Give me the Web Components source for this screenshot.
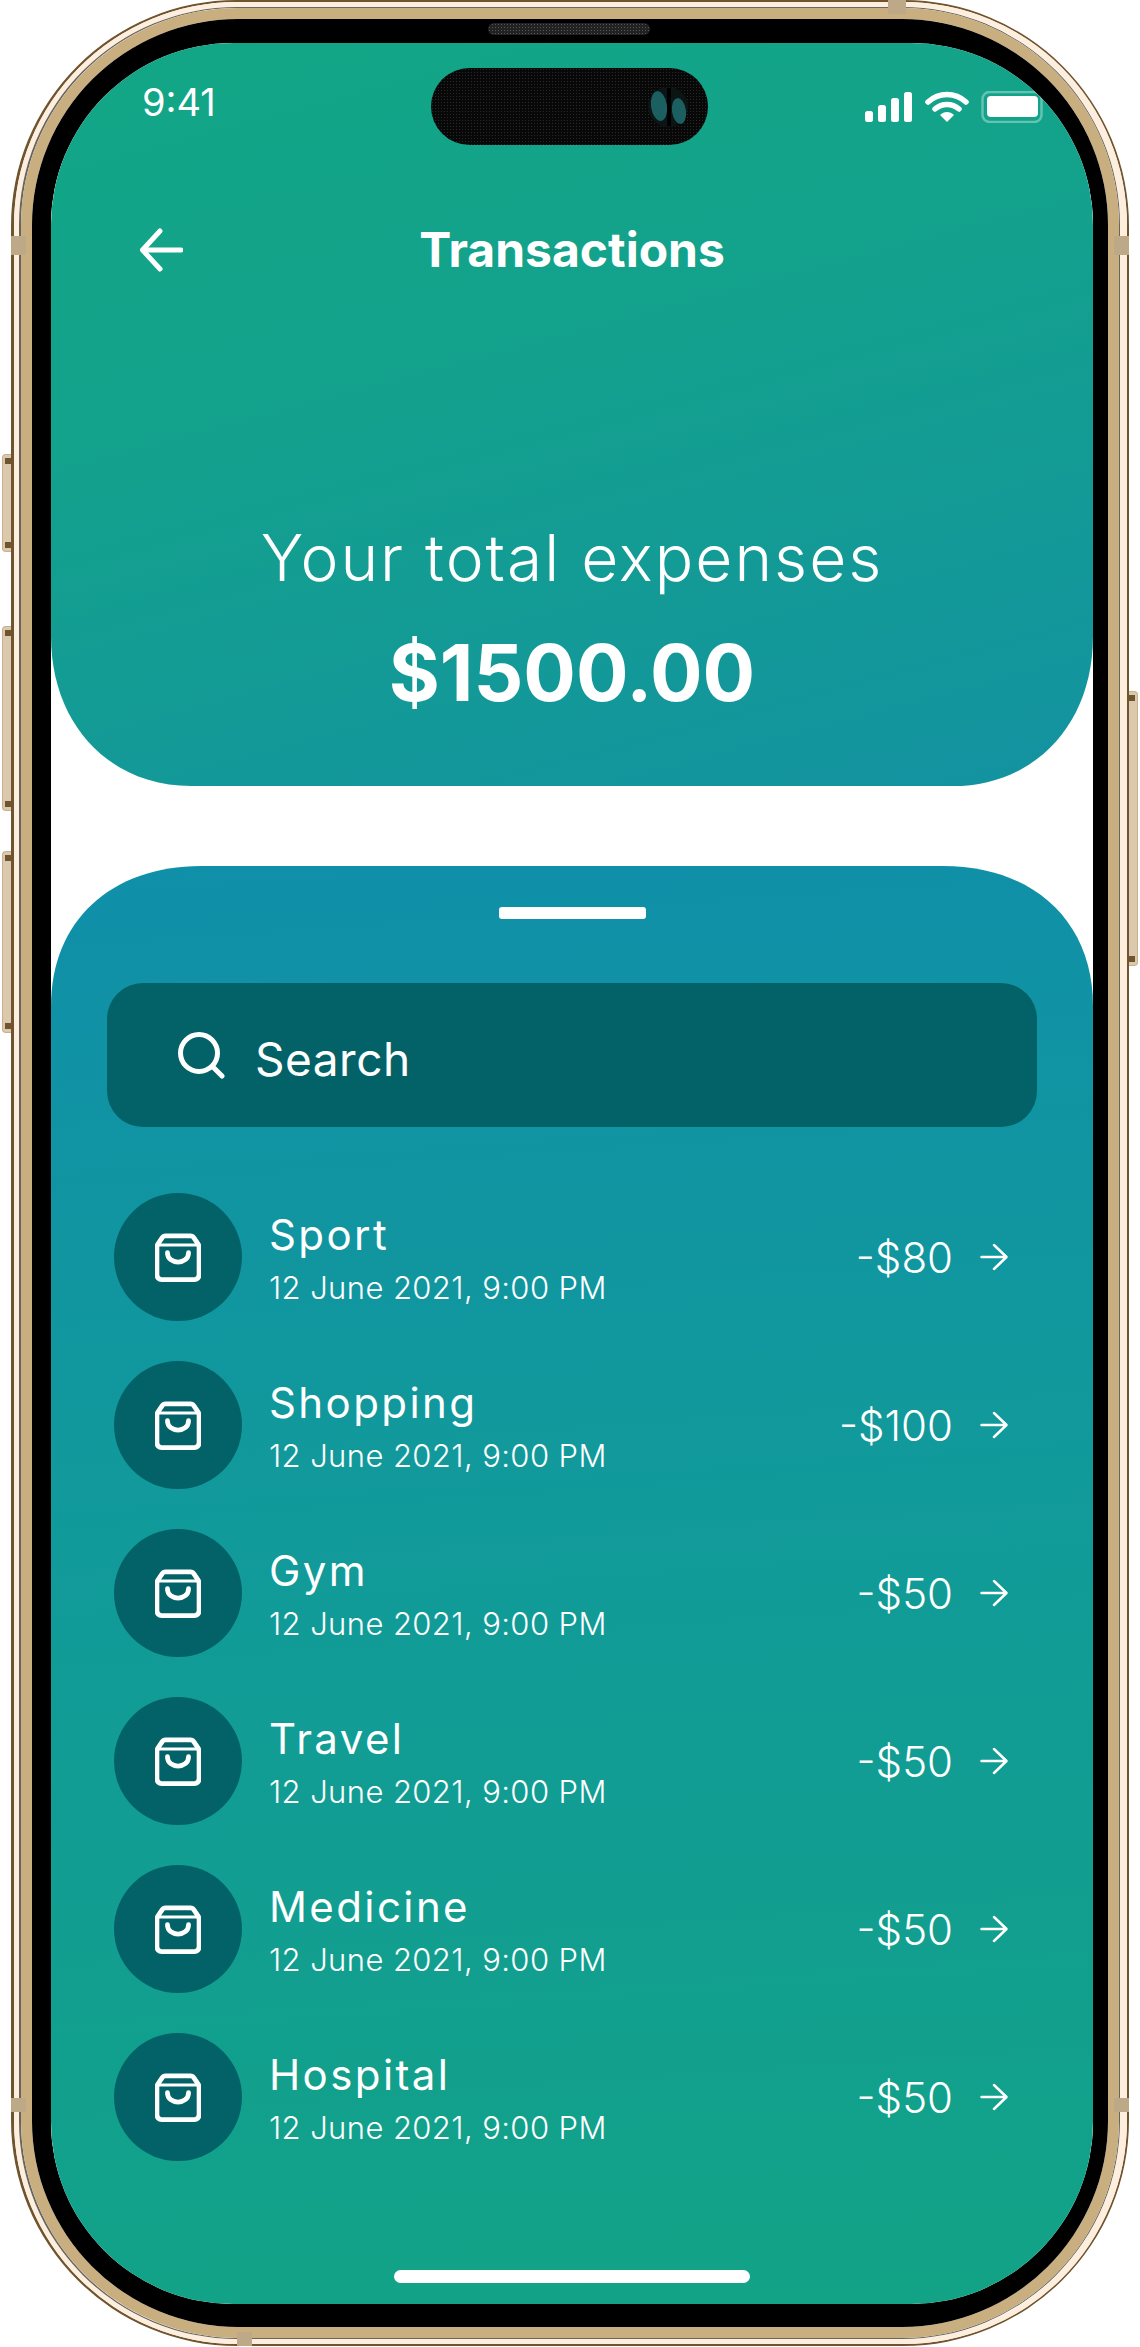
<!DOCTYPE html>
<html lang="en">
<head>
<meta charset="utf-8">
<title>Transactions</title>
<style>
	html, body { margin: 0; background: #fff; }
	body { font-family: Inter, "Liberation Sans", sans-serif; color: #fff; }
</style>
</head>
<body>
<phone-frame>
	<expense-summary amount="$1500.00">Your total expenses</expense-summary>
	<transaction-panel>
		<search-box>Search</search-box>
		<transaction-row amount="-$80" date="12 June 2021, 9:00 PM">Sport</transaction-row>
		<transaction-row amount="-$100" date="12 June 2021, 9:00 PM">Shopping</transaction-row>
		<transaction-row amount="-$50" date="12 June 2021, 9:00 PM">Gym</transaction-row>
		<transaction-row amount="-$50" date="12 June 2021, 9:00 PM">Travel</transaction-row>
		<transaction-row amount="-$50" date="12 June 2021, 9:00 PM">Medicine</transaction-row>
		<transaction-row amount="-$50" date="12 June 2021, 9:00 PM">Hospital</transaction-row>
	</transaction-panel>
</phone-frame>

<script>
/**
 * PhoneFrame
 * Gold device shell, nested ring by ring, with the screen in its slot.
 */
class PhoneFrame extends HTMLElement {
	constructor() {
		super();
		this.attachShadow({ mode: 'open' });
	}

	connectedCallback() {
		this.render();
	}

	render() {
		this.shadowRoot.innerHTML = `
    <style>
        :host { display: block; position: relative; width: 1118px; height: 2346px; margin-left: 11px; }
        .ring { box-sizing: border-box; height: 100%; border-style: solid; }
        .brown { border-color: #6f5430; border-width: 2px 2px 2px 3px; border-radius: 226px; }
        .cream { border-color: #fdeedd; border-width: 5px 7px 5px 5px; border-radius: 223px; }
        .line { border-color: #66665f; border-width: 1px 1px 1px 2px; border-radius: 218px; }
        .tan { border-color: #c9ae80; border-width: 11px; border-radius: 217px; }
        .bezel { position: relative; border-color: #000; border-width: 24px 15px 23px 19px; border-radius: 206px; }
        .screen {
          display: flex; flex-direction: column; gap: 80px;
          height: 100%; overflow: hidden; background: #fff; border-radius: 182px;
        }
        .speaker {
          position: absolute; left: 437px; top: -20px; width: 162px; height: 12px; border-radius: 6px;
          background: #222 radial-gradient(#555 .6px, transparent .8px) 0 0 / 3px 3px;
        }
        .band { position: absolute; background: #bda888; }
        .key {
          position: absolute; width: 9px; box-sizing: border-box; background: #dcc8ac;
          border: 1px solid #c8b08c; border-right: 0; border-radius: 4px 0 0 4px;
        }
        .key.right { border: 1px solid #c8b08c; border-left: 0; border-radius: 0 4px 4px 0; }
        .key::before, .key::after {
          content: ''; position: absolute; left: 2px; right: 0; height: 6px; background: #6f5430;
        }
        .key.right::before, .key.right::after { left: 0; right: 2px; }
        .key::before { top: 3px; }
        .key::after { bottom: 3px; }
    </style>
    <div class="ring brown"><div class="ring cream"><div class="ring line"><div class="ring tan">
      <div class="ring bezel">
        <div class="speaker"></div>
        <div class="screen"><slot></slot></div>
      </div>
    </div></div></div></div>
    <div class="key" style="left:-9px;top:454px;height:98px"></div>
    <div class="key" style="left:-9px;top:626px;height:185px"></div>
    <div class="key" style="left:-9px;top:851px;height:182px"></div>
    <div class="key right" style="left:1118px;top:691px;height:275px"></div>
    <div class="band" style="left:0;top:236px;width:15px;height:19px"></div>
    <div class="band" style="left:1103px;top:236px;width:15px;height:19px"></div>
    <div class="band" style="left:0;top:2098px;width:15px;height:14px"></div>
    <div class="band" style="left:1103px;top:2098px;width:15px;height:14px"></div>
    <div class="band" style="left:877px;top:0;width:18px;height:14px"></div>
    <div class="band" style="left:226px;top:2332px;width:15px;height:14px"></div>
    `;
	}
}

/**
 * StatusBar
 * Clock, dynamic island and the signal, wifi and battery icons.
 */
class StatusBar extends HTMLElement {
	constructor() {
		super();
		this.attachShadow({ mode: 'open' });
	}

	connectedCallback() {
		this.render();
	}

	render() {
		this.shadowRoot.innerHTML = `
    <style>
        :host { display: flex; align-items: flex-start; padding: 25px 49px 0 91px; }
        .time { flex: 0 0 289px; margin-top: 9px; font: 400 38px/50px Inter, sans-serif; }
        .island {
          display: flex; align-items: center; justify-content: flex-end;
          width: 277px; height: 77px; padding-right: 18px; box-sizing: border-box;
          border-radius: 39px;
          background: #080808 radial-gradient(#2a2a2a .5px, transparent .8px) 0 0 / 3px 3px;
        }
        .island svg { display: block; }
        .icons { display: flex; align-items: flex-start; margin: 23px 0 0 auto; }
        .icons svg { display: block; }
    </style>
    <div class="time">9:41</div>
    <div class="island">
      <svg width="44" height="44" viewBox="0 0 44 44">
        <circle cx="22" cy="22" r="20" fill="#0c1414"/>
        <ellipse cx="13" cy="21" rx="8" ry="15" fill="#1b5f60" transform="rotate(-8 13 21)"/>
        <ellipse cx="33" cy="26" rx="7" ry="13" fill="#1b5f60" transform="rotate(-8 33 26)"/>
        <rect x="21" y="3" width="4" height="38" fill="#000"/>
      </svg>
    </div>
    <div class="icons">
      <svg width="180" height="32" viewBox="0 0 180 32" fill="#fff">
        <rect x="1" y="20" width="8" height="11" rx="2.500"/>
        <rect x="14" y="14" width="8" height="17" rx="2.500"/>
        <rect x="27" y="7" width="8" height="24" rx="2.500"/>
        <rect x="40" y="1" width="8" height="30" rx="2.500"/>
        <path d="M64 11 C75 1 91 1 102 11" fill="none" stroke="#fff" stroke-width="5.500" stroke-linecap="round"/>
        <path d="M71 18 C78 12 88 12 95 18" fill="none" stroke="#fff" stroke-width="5.500" stroke-linecap="round"/>
        <path d="M76 24 C80 20 86 20 90 24 L83 31 Z"/>
        <rect x="118.500" y="1" width="59" height="30" rx="7" fill="none" stroke="#fff" stroke-opacity=".35" stroke-width="2.500"/>
        <rect x="123" y="5" width="51" height="21" rx="4"/>
      </svg>
    </div>
    `;
	}
}

/**
 * ExpenseSummary
 * Top green card. Slot holds the caption, the amount comes from an attribute.
 */
class ExpenseSummary extends HTMLElement {
	constructor() {
		super();
		this.attachShadow({ mode: 'open' });
	}

	connectedCallback() {
		this.amount = this.getAttribute('amount') || '$0.00';
		this.render();
	}

	render() {
		this.shadowRoot.innerHTML = `
    <style>
        :host {
          display: block; flex: 0 0 743px; box-sizing: border-box;
          /* squircle corners, a plain radius comes out too round */
          clip-path: path('M0 0 H1042 V593 C1042 683 982 743 902 743 H140 C60 743 0 683 0 593 Z');
          background: linear-gradient(165deg, #12a685 0%, #13a28c 40%, #1392a1 100%);
        }
        .nav { display: grid; grid-template-columns: 1fr auto 1fr; align-items: center; height: 70px; margin-top: 70px; padding: 0 88px; }
        .nav svg { display: block; }
        h1 { margin: 0; font: 700 48px/70px Inter, sans-serif; }
        .caption { margin-top: 233px; text-align: center; font: 300 64px/80px Inter, sans-serif; letter-spacing: 2px; }
        .amount { margin-top: 35px; text-align: center; font: 700 78px/80px Inter, sans-serif; }
    </style>
    <status-bar></status-bar>
    <div class="nav">
      <svg width="44" height="46" viewBox="0 0 44 46" fill="none" stroke="#fff" stroke-width="5" stroke-linecap="round" stroke-linejoin="round">
        <path d="M42 23 H4 M21 4 L3.500 23 L21 42"/>
      </svg>
      <h1>Transactions</h1>
    </div>
    <div class="caption"><slot></slot></div>
    <div class="amount">${this.amount}</div>
    `;
	}
}

/**
 * TransactionPanel
 * Lower sheet with drag handle, list in the slot and the home indicator.
 */
class TransactionPanel extends HTMLElement {
	constructor() {
		super();
		this.attachShadow({ mode: 'open' });
	}

	connectedCallback() {
		this.render();
	}

	render() {
		this.shadowRoot.innerHTML = `
    <style>
        :host {
          display: flex; flex-direction: column; flex: 1; box-sizing: border-box; padding-top: 41px;
          clip-path: path('M0 140 C0 55 60 0 150 0 H892 C982 0 1042 55 1042 140 V1438 H0 Z');
          background: linear-gradient(176deg, #108fa9 0%, #119a9a 45%, #12a386 100%);
        }
        .handle { align-self: center; width: 147px; height: 12px; margin-bottom: 64px; border-radius: 3px; background: #fff; }
        .home { align-self: center; width: 356px; height: 13px; margin: auto 0 21px; border-radius: 7px; background: #fff; }
    </style>
    <div class="handle"></div>
    <slot></slot>
    <div class="home"></div>
    `;
	}
}

/**
 * SearchBox
 */
class SearchBox extends HTMLElement {
	constructor() {
		super();
		this.attachShadow({ mode: 'open' });
	}

	connectedCallback() {
		this.render();
	}

	render() {
		this.shadowRoot.innerHTML = `
    <style>
        :host {
          display: flex; align-items: center; gap: 30px; height: 144px; margin: 0 56px 66px;
          padding-left: 70px; box-sizing: border-box; border-radius: 36px; background: #036268;
          font: 400 46px/1 Inter, sans-serif;
        }
        svg { display: block; flex: none; }
        .label { padding-top: 8px; letter-spacing: .5px; }
    </style>
    <svg width="48" height="48" viewBox="0 0 48 48" fill="none" stroke="#fff" stroke-width="5" stroke-linecap="round">
      <circle cx="22" cy="22" r="18.500"/>
      <path d="M36 36 L45 45"/>
    </svg>
    <div class="label"><slot></slot></div>
    `;
	}
}

/**
 * TransactionRow
 * Bag badge, name in the slot, date and amount from attributes, arrow.
 */
class TransactionRow extends HTMLElement {
	constructor() {
		super();
		this.attachShadow({ mode: 'open' });
	}

	connectedCallback() {
		this.date = this.getAttribute('date') || '';
		this.amount = this.getAttribute('amount') || '';
		this.render();
	}

	render() {
		this.shadowRoot.innerHTML = `
    <style>
        :host {
          display: flex; align-items: center; height: 128px; margin-bottom: 40px;
          padding: 0 85px 0 63px; box-sizing: border-box;
        }
        .badge {
          display: flex; align-items: center; justify-content: center; flex: none;
          width: 128px; height: 128px; border-radius: 50%; background: #036268;
        }
        svg { display: block; flex: none; }
        .text { flex: 1; margin: 3px 0 0 27px; }
        .name { font: 400 42px/50px Inter, sans-serif; letter-spacing: 2.400px; }
        .date { margin-top: 9px; font: 300 31px/38px Inter, sans-serif; letter-spacing: .4px; }
        .amount { margin: 2px 27px 0 0; font: 300 42px/50px Inter, sans-serif; }
    </style>
    <div class="badge">
      <svg width="46" height="49" viewBox="0 0 48 50" fill="none" stroke="#fff" stroke-width="5" stroke-linecap="round" stroke-linejoin="round">
        <path d="M11 2.500 H37 C39 2.500 40 3.500 41 5 L45 11 C45.500 12 46 13 46 14 V43 C46 46 44 48 41 48 H7 C4 48 2 46 2 43 V14 C2 13 2.500 12 3 11 L7 5 C8 3.500 9 2.500 11 2.500 Z"/>
        <path d="M4 12 H44" stroke-width="3"/>
        <path d="M13 20 C13 33 35 33 35 20"/>
      </svg>
    </div>
    <div class="text">
      <div class="name"><slot></slot></div>
      <div class="date">${this.date}</div>
    </div>
    <div class="amount">${this.amount}</div>
    <svg width="28" height="28" viewBox="0 0 28 28" fill="none" stroke="#fff" stroke-width="2.500" stroke-linecap="round" stroke-linejoin="round">
      <path d="M1.500 14 H26 M14 2 L26.500 14 L14 26"/>
    </svg>
    `;
	}
}

window.customElements.define('phone-frame', PhoneFrame);
window.customElements.define('status-bar', StatusBar);
window.customElements.define('expense-summary', ExpenseSummary);
window.customElements.define('transaction-panel', TransactionPanel);
window.customElements.define('search-box', SearchBox);
window.customElements.define('transaction-row', TransactionRow);
</script>
</body>
</html>
